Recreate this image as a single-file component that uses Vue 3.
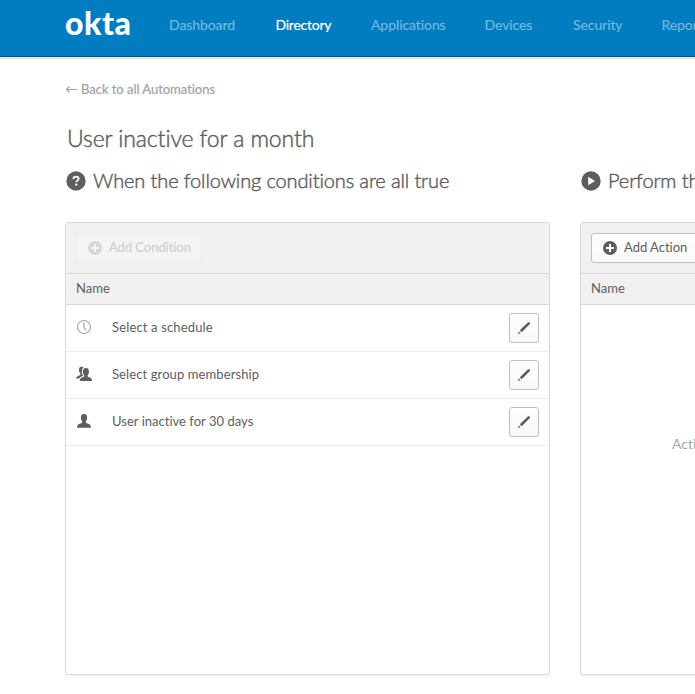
<script setup>
const nav = [
  { label: 'Dashboard', width: 67 },
  { label: 'Directory', width: 56, active: true },
  { label: 'Applications', width: 74 },
  { label: 'Devices', width: 49 },
  { label: 'Security', width: 49 },
  { label: 'Reports', width: 50 },
]
const conditions = [
  { icon: 'clock', label: 'Select a schedule', cls: 'r1' },
  { icon: 'group', label: 'Select group membership', cls: 'r2' },
  { icon: 'person', label: 'User inactive for 30 days', cls: 'r3' },
]
</script>

<template>
  <div class="page">
    <header class="topbar">
      <div class="logo">okta</div>
      <nav class="nav">
        <a v-for="n in nav" :key="n.label" :class="{ active: n.active }" :style="{ width: n.width + 'px' }">{{ n.label }}</a>
      </nav>
    </header>
    <main class="main">
      <a class="back">
        <svg width="12" height="9" viewBox="0 0 12 9"><path d="M4.500 1.500 1.500 4.500 4.500 7.500M1.500 4.500h10.500" fill="none" stroke="#a2a2a2" stroke-width="1.200" /></svg>
        <span>Back to all Automations</span>
      </a>
      <h1>User inactive for a month</h1>
      <div class="columns">
        <section class="col">
          <h2>
            <svg width="20" height="20" viewBox="0 0 20 20">
              <circle cx="10" cy="10" r="9.700" fill="#5e5e5e" />
              <path d="M7.400 8.100C7.400 6.400 8.500 5.600 10 5.600s2.600.8 2.600 2.100c0 1.700-2.300 1.700-2.300 3.500" fill="none" stroke="#fff" stroke-width="1.900" />
              <rect x="9.200" y="12.600" width="2.100" height="2" fill="#fff" />
            </svg>
            <span class="h-when">When the following conditions are all true</span>
          </h2>
          <div class="panel">
            <div class="toolbar">
              <button class="btn disabled">
                <svg width="14" height="14" viewBox="0 0 14 14"><circle cx="7" cy="7" r="7" fill="#d6d6d6" /><path d="M7 3v8M3 7h8" stroke="#f6f6f6" stroke-width="2" /></svg>
                <span>Add Condition</span>
              </button>
            </div>
            <div class="thead">Name</div>
            <div v-for="c in conditions" :key="c.label" class="row">
              <div class="icon">
                <svg v-if="c.icon === 'clock'" width="16" height="16" viewBox="0 0 16 16">
                  <circle cx="8" cy="8" r="6.500" fill="none" stroke="#a9a9a9" stroke-width="1.200" />
                  <path d="M7.800 3.500V8l2.200 2.800" fill="none" stroke="#a9a9a9" stroke-width="1.200" />
                </svg>
                <svg v-else-if="c.icon === 'group'" width="16" height="16" viewBox="0 0 16 16">
                  <path d="M7.200 1C4 .4 2.800 1.700 3.100 4c-.4.400-.1 1.500.4 1.800.2 1 .5 1.500.9 1.900.1 1-.3 1.500-1.600 2C1.200 10.300.1 10.900 0 12.600h4.200l3.300-3.300V2z" fill="#5e5e5e" />
                  <path d="M9.900 2.100c2.300 0 3.200 1.300 2.900 3.500.5.400.2 1.600-.3 1.900-.2 1.100-.6 1.600-.9 2 0 .9.200 1.300 1.700 1.800 1.800.6 2.700 1.300 2.700 3.700H3.800c0-2.400 1-3.100 2.700-3.700 1.500-.5 1.700-.9 1.700-1.800-.4-.4-.7-.9-.9-2-.5-.3-.8-1.500-.3-1.900-.2-2.200.7-3.500 2.900-3.500z" fill="#5e5e5e" stroke="#fff" stroke-width="2.200" paint-order="stroke" />
                </svg>
                <svg v-else width="16" height="16" viewBox="0 0 16 16">
                  <path d="M8 .9c2.300 0 3.300 1.300 3 3.600.5.400.2 1.700-.3 2-.2 1.200-.6 1.700-1 2.200 0 1 .3 1.300 1.800 1.800 2.100.6 3.500 1.300 3.500 4.300H1c0-3 1.400-3.700 3.500-4.300 1.500-.5 1.800-.8 1.800-1.800-.4-.5-.8-1-1-2.200-.5-.3-.8-1.600-.3-2C4.700 2.200 5.700.9 8 .9z" fill="#5e5e5e" />
                </svg>
              </div>
              <span class="label" :class="c.cls">{{ c.label }}</span>
              <button class="edit">
                <svg width="14" height="14" viewBox="0 0 14 14">
                  <path d="M2.800 9.300 10.800 1.600c.6-.6 1.400-.6 1.900-.1s.6 1.200 0 1.800L4.700 11.200z" fill="#5e5e5e" />
                  <path d="M2 10.200 3.800 12 .5 13.300z" fill="#777" />
                </svg>
              </button>
            </div>
          </div>
        </section>
        <section class="col">
          <h2 class="second">
            <svg width="20" height="20" viewBox="0 0 20 20">
              <circle cx="10" cy="10" r="9.700" fill="#5e5e5e" />
              <path d="M7.200 5.800 14 10l-6.800 4.200z" fill="#fff" />
            </svg>
            <span class="h-perform">Perform the following actions</span>
          </h2>
          <div class="panel">
            <div class="toolbar">
              <button class="btn">
                <svg width="14" height="14" viewBox="0 0 14 14"><circle cx="7" cy="7" r="7" fill="#5e5e5e" /><path d="M7 3v8M3 7h8" stroke="#fff" stroke-width="2" /></svg>
                <span>Add Action</span>
              </button>
            </div>
            <div class="thead">Name</div>
            <div class="empty">Actions</div>
          </div>
        </section>
      </div>
    </main>
  </div>
</template>

<style>
html, body { overflow: hidden; background: #fff; }
</style>

<style scoped>
* { box-sizing: border-box; }
.page { width: 695px; height: 694px; overflow: hidden; font-family: Lato, "Liberation Sans", sans-serif; font-variant-ligatures: none; color: #5e5e5e; font-size: 13px; }
.topbar { height: 59px; display: flex; background: #007dc1; border-bottom: 2px solid #e3e6e9; box-shadow: inset 0 -1px #00527f; padding-left: 65px; }
.logo { flex: none; width: 104px; color: #fff; font-weight: 900; font-size: 32px; line-height: 46px; letter-spacing: 0.500px; }
.nav { display: flex; gap: 39.500px; padding-top: 15px; }
.nav a { flex: none; font-size: 14px; line-height: 20px; white-space: nowrap; color: #73b8dd; letter-spacing: -0.080px; -webkit-text-stroke: 0.200px #73b8dd; }
.nav a.active { color: #fff; -webkit-text-stroke: 0.200px #fff; letter-spacing: -0.250px; }
.main { padding: 21px 0 0 65px; }
.back { display: flex; align-items: center; gap: 4px; height: 18px; line-height: 18px; color: #a2a2a2; font-size: 13px; letter-spacing: -0.030px; white-space: nowrap; -webkit-text-stroke: 0.200px #a2a2a2; }
h1, h2 { margin: 0; font-weight: 300; color: #5e5e5e; white-space: nowrap; -webkit-text-stroke: 0.450px #5e5e5e; }
h1 { margin-top: 24px; padding-left: 2px; font-size: 23px; line-height: 32px; letter-spacing: -0.100px; }
.columns { display: grid; grid-template-columns: 485px 485px; gap: 30px; margin-top: 11px; }
h2 { display: flex; align-items: center; gap: 7px; height: 32px; padding-left: 1px; font-size: 20px; letter-spacing: -0.120px; }
h2 span { padding-bottom: 3px; }
.panel { margin-top: 25px; height: 453px; border: 1px solid #d8d8d8; border-radius: 3px; box-shadow: 0 2px 0 #f4f4f4; overflow: hidden; background: #fff; }
.toolbar { height: 51px; padding: 10px; background: #f1f1f1; border-bottom: 1px solid #d8d8d8; }
.btn { display: flex; align-items: center; gap: 7px; height: 30px; padding: 0 11px; border: 1px solid #bfbfbf; border-radius: 3px; background: linear-gradient(#fff, #f8f8f8); font: 13px Lato, sans-serif; font-variant-ligatures: none; color: #5e5e5e; white-space: nowrap; }
.btn span { padding-bottom: 2px; }
.btn svg { flex: none; }
.btn.disabled { width: 126px; border-color: #ececec; background: #f4f4f4; color: #d0d0d0; letter-spacing: -0.050px; -webkit-text-stroke: 0.200px #d0d0d0; }
.thead { height: 31px; padding-left: 10px; line-height: 29px; background: #f1f1f1; border-bottom: 1px solid #d8d8d8; }
.row { display: flex; align-items: center; height: 47px; padding: 0 10px; border-bottom: 1px solid #ececec; }
.icon { width: 36px; height: 18px; }
.label { flex: 1; white-space: nowrap; padding-bottom: 2px; }
.r1 { letter-spacing: 0.150px; }
.r2 { letter-spacing: 0.100px; }
.r3 { letter-spacing: 0.020px; }
.edit { width: 30px; height: 30px; padding: 0; border: 1px solid #bfbfbf; border-radius: 3px; background: linear-gradient(#fff, #f8f8f8); display: flex; align-items: center; justify-content: center; }
.empty { padding: 129px 0 0 91px; line-height: 20px; font-size: 14px; color: #a7a7a7; }
</style>
